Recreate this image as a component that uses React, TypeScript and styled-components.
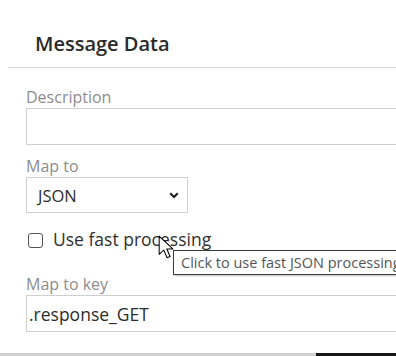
import styled, { createGlobalStyle } from "styled-components";

const GlobalStyle = createGlobalStyle`
  html, body {
    margin: 0;
    padding: 0;
    background: #ffffff;
    overflow: hidden;
  }
  body {
    font-family: "Open Sans", "Noto Sans", sans-serif;
    width: 396px;
    height: 356px;
  }
`;

const Page = styled.div`
  width: 396px;
  height: 356px;
  display: flex;
  flex-direction: column;
  position: relative;
  overflow: hidden;
`;

const Header = styled.div`
  margin-left: 8px;
  padding: 30px 0 10px 27px;
  border-bottom: 1px solid #d4d4d4;
`;

const Title = styled.h2`
  margin: 0;
  font-size: 20px;
  line-height: 27px;
  font-weight: 600;
  color: #2a2a2a;
`;

const Form = styled.div`
  display: flex;
  flex-direction: column;
  padding: 19px 0 0 26px;
`;

const Label = styled.label<{ $top?: number }>`
  display: block;
  margin-top: ${(p) => p.$top ?? 0}px;
  margin-bottom: 1px;
  font-size: 16px;
  line-height: 20px;
  color: #8c8c8c;
`;

const TextBox = styled.div`
  box-sizing: border-box;
  width: 400px;
  height: 37px;
  border: 1px solid #cfcfcf;
  padding: 0 2px;
  display: flex;
  align-items: center;
  font-size: 17.5px;
  color: #2b2b2b;
`;

const Select = styled.div`
  box-sizing: border-box;
  width: 162px;
  height: 36px;
  border: 1px solid #cfcfcf;
  padding: 0 8px 0 11px;
  display: flex;
  align-items: center;
  justify-content: space-between;
  font-size: 16.5px;
  color: #2b2b2b;
`;

const CheckRow = styled.div`
  margin-top: 15px;
  height: 22px;
  display: flex;
  align-items: center;
  gap: 10px;
  padding-left: 2px;
  font-size: 17.5px;
  line-height: 22px;
  color: #2f2f2f;
`;

const Box = styled.span`
  box-sizing: border-box;
  width: 15px;
  height: 15px;
  border: 1px solid #555555;
  border-radius: 3px;
  background: #ffffff;
  margin-top: 2px;
`;

const Tooltip = styled.div`
  position: absolute;
  left: 173px;
  top: 250px;
  height: 25px;
  width: 270px;
  box-sizing: border-box;
  border: 1px solid #3a3a3a;
  background: #ffffff;
  box-shadow: 1px 1px 2px rgba(0, 0, 0, 0.25);
  padding-left: 7px;
  display: flex;
  align-items: center;
  font-size: 14.5px;
  color: #555555;
  white-space: nowrap;
`;

const Cursor = styled.svg`
  position: absolute;
  left: 157px;
  top: 235px;
`;

const Footer = styled.div`
  margin-top: auto;
  height: 3px;
  display: flex;
`;

const Track = styled.div`
  width: 316px;
  background: #d0d0d0;
`;

const Thumb = styled.div`
  flex: 1;
  background: #161616;
`;

function Chevron() {
  return (
    <svg width="10" height="7" viewBox="0 0 10 7">
      <path d="M1.2 1.2 L5 5 L8.8 1.2" fill="none" stroke="#222" strokeWidth="2.2" />
    </svg>
  );
}

export default function App() {
  return (
    <>
      <GlobalStyle />
      <Page>
        <Header>
          <Title>Message Data</Title>
        </Header>
        <Form>
          <Label>Description</Label>
          <TextBox />
          <Label $top={11}>Map to</Label>
          <Select>
            <span>JSON</span>
            <Chevron />
          </Select>
          <CheckRow>
            <Box />
            <span>Use fast processing</span>
          </CheckRow>
          <Label $top={24}>Map to key</Label>
          <TextBox>.response_GET</TextBox>
        </Form>
        <Footer>
          <Track />
          <Thumb />
        </Footer>
        <Tooltip>Click to use fast JSON processing</Tooltip>
        <Cursor width="18" height="25" viewBox="0 0 14 22">
          <path
            d="M1 1 L1 17 L5 13.2 L8 20 L10.6 18.9 L7.7 12.3 L13 12.3 Z"
            fill="#ffffff"
            stroke="#000000"
            strokeWidth="0.9"
            strokeLinejoin="round"
          />
        </Cursor>
      </Page>
    </>
  );
}
